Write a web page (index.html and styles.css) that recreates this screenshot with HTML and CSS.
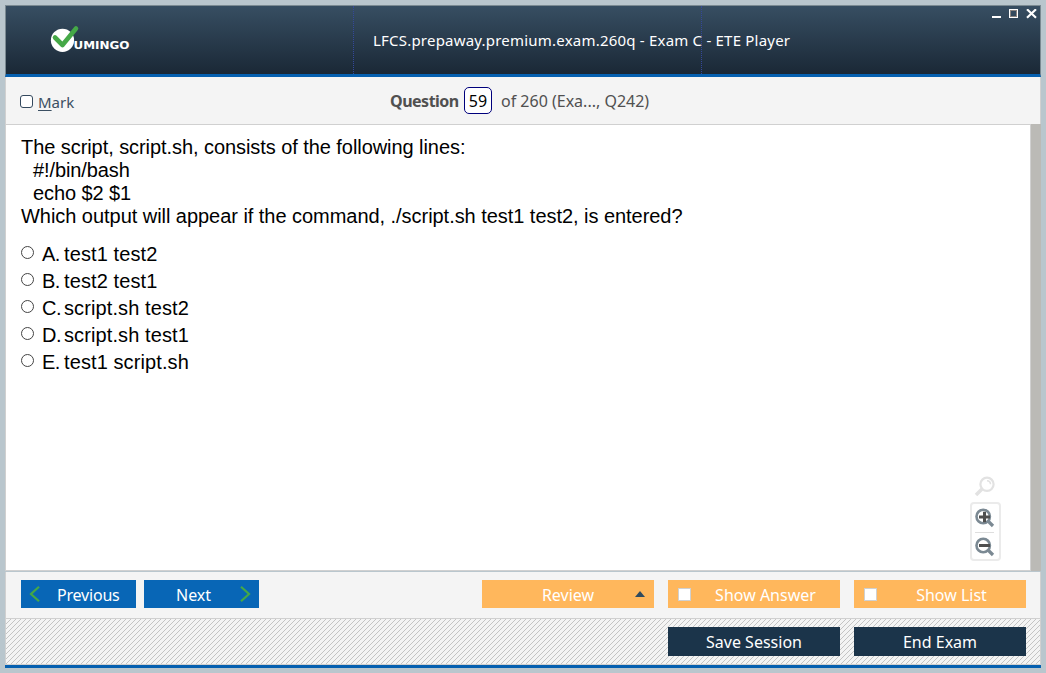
FILE: index.html
```html
<!DOCTYPE html>
<html lang="en">
<head>
<meta charset="utf-8">
<title>LFCS.prepaway.premium.exam.260q - Exam C - ETE Player</title>
<link rel="stylesheet" href="styles.css">
</head>
<body>
<div class="window">
  <header class="titlebar">
    <div class="brand">
      <svg class="logo" width="84" height="30" viewBox="0 0 84 30">
        <circle cx="12.5" cy="16.3" r="11.6" fill="#fff"/>
        <path d="M5 13.5L12.5 21L26 4.5" fill="none" stroke="#45a847" stroke-width="4.6" stroke-linecap="round" stroke-linejoin="round"/>
        <text class="logo-text" x="23.5" y="25" textLength="56" lengthAdjust="spacingAndGlyphs">UMINGO</text>
      </svg>
    </div>
    <h1 class="title"><span class="title-text">LFCS.prepaway.premium.exam.260q - Exam C - ETE Player</span></h1>
    <svg class="controls" width="46" height="12" viewBox="0 0 46 12" shape-rendering="crispEdges">
      <path d="M0 7h9v2H0z" fill="#fff"/>
      <rect x="17.5" y=".5" width="8" height="8" fill="none" stroke="#fff"/>
      <rect x="18.5" y="1.5" width="6" height="6" fill="none" stroke="#8b8480"/>
      <path d="M35 .3L44 8.7M44 .3L35 8.7" stroke="#fff" stroke-width="2.2" fill="none" shape-rendering="auto"/>
    </svg>
  </header>
  <section class="questionbar">
    <label class="mark"><span class="markbox"></span><span class="mark-text"><u>M</u>ark</span></label>
    <b class="q-label">Question</b>
    <span class="q-number">59</span>
    <span class="q-total">of 260 (Exa..., Q242)</span>
  </section>
  <main class="content">
    <div class="page">
      <div class="question">
        <p>The script, script.sh, consists of the following lines:</p>
        <p class="code">#!/bin/bash</p>
        <p class="code">echo $2 $1</p>
        <p class="ask">Which output will appear if the command, ./script.sh test1 test2, is entered?</p>
      </div>
      <ul class="answers">
        <li><i class="radio"></i><span class="letter">A.</span><span class="answer">test1 test2</span></li>
        <li><i class="radio"></i><span class="letter">B.</span><span class="answer">test2 test1</span></li>
        <li><i class="radio"></i><span class="letter">C.</span><span class="answer">script.sh test2</span></li>
        <li><i class="radio"></i><span class="letter">D.</span><span class="answer">script.sh test1</span></li>
        <li><i class="radio"></i><span class="letter">E.</span><span class="answer">test1 script.sh</span></li>
      </ul>
      <div class="zoom">
        <svg class="zoom-reset" width="22" height="22" viewBox="0 0 22 22">
          <circle cx="13" cy="8.3" r="6.6" fill="none" stroke="#e2e2e2" stroke-width="2.2"/>
          <path d="M13 4.8A3.6 3.6 0 0 1 16.5 8.3" fill="none" stroke="#e2e2e2" stroke-width="1.6"/>
          <path d="M8 13L2 19" stroke="#e2e2e2" stroke-width="3.6"/>
        </svg>
        <div class="zoom-box">
          <svg width="20" height="20" viewBox="0 0 20 20">
            <circle cx="8.2" cy="8.5" r="6.7" fill="none" stroke="#7b8993" stroke-width="2.6"/>
            <path d="M13 13L18 18" stroke="#7b8993" stroke-width="3.2"/>
            <path d="M4 9h11M9.5 3.7v10.6" stroke="#4f4f4f" stroke-width="3"/>
          </svg>
          <hr class="zoom-line">
          <svg width="20" height="20" viewBox="0 0 20 20">
            <circle cx="8.2" cy="8.5" r="6.7" fill="none" stroke="#7b8993" stroke-width="2.6"/>
            <path d="M13 13L18 18" stroke="#7b8993" stroke-width="3.2"/>
            <path d="M4 8.5h11" stroke="#4f4f4f" stroke-width="3"/>
          </svg>
        </div>
      </div>
    </div>
    <div class="scrollbar"></div>
  </main>
  <nav class="navbar">
    <div class="btn blue prev">
      <svg width="11" height="18" viewBox="0 0 11 18"><path d="M10 1.7L2 9L10 16.3" fill="none" stroke="#45a847" stroke-width="2.2"/></svg>
      <span class="t-prev">Previous</span>
    </div>
    <div class="btn blue next">
      <span class="t-next">Next</span>
      <svg width="11" height="18" viewBox="0 0 11 18"><path d="M1 1.7L9 9L1 16.3" fill="none" stroke="#45a847" stroke-width="2.2"/></svg>
    </div>
    <div class="btn orange review"><span>Review</span>
      <svg class="arrow" width="10" height="6" viewBox="0 0 10 6"><path d="M0 6L5 0L10 6z" fill="#2f4a5e"/></svg>
    </div>
    <div class="btn orange toggle"><i class="check"></i><span>Show Answer</span></div>
    <div class="btn orange toggle"><i class="check"></i><span>Show List</span></div>
  </nav>
  <footer class="sessionbar">
    <svg class="hatch" width="100%" height="100%">
      <defs><pattern id="hatch" width="5" height="5" patternUnits="userSpaceOnUse">
        <path d="M4 0h1v1H4zM3 1h1v1H3zM2 2h1v1H2zM1 3h1v1H1zM0 4h1v1H0z" fill="#c4c4c4" shape-rendering="crispEdges"/>
      </pattern></defs>
      <rect width="100%" height="100%" fill="url(#hatch)"/>
    </svg>
    <div class="btn navy"><span>Save Session</span></div>
    <div class="btn navy"><span>End Exam</span></div>
  </footer>
</div>
</body>
</html>
```
FILE: styles.css
```css
* { box-sizing: border-box; }
body { margin: 0; background: #b9c6cd; font-family: "Noto Sans", "Open Sans", sans-serif; overflow: hidden; }
p, h1, ul { margin: 0; padding: 0; }
span, b { white-space: nowrap; }
.window { width: 1036px; height: 663px; margin: 5px; display: flex; flex-direction: column; border-bottom: 3px solid #0560b0; }

.titlebar { height: 72px; flex: none; display: grid; grid-template-columns: 348px 348px 1fr; border: 1px solid #7b8a92; border-bottom: 3px solid #0560b0; background: linear-gradient(#374e62, #1a2836); }
.brand { padding: 18px 0 0 44px; border-right: 1px dotted #34489a; }
.logo { display: block; }
.logo-text { font: bold 9.6px "DejaVu Sans", sans-serif; fill: #fff; }
.title { padding: 23px 0 0 19px; border-right: 1px dotted #34489a; font-size: 15px; line-height: 22px; font-weight: 400; letter-spacing: .21px; color: #fff; }
.controls { justify-self: end; margin: 3px 2px 0 0; display: block; }

.questionbar { height: 47px; flex: none; display: flex; align-items: flex-start; background: #f4f4f4; border-left: 1px solid #d0d0d0; border-right: 1px solid #d0d0d0; color: #505050; font-size: 16px; line-height: 22px; }
.mark { display: flex; width: 370px; padding: 14px 0 0 14px; color: #3b4f62; font-size: 15px; }
.markbox { width: 13px; height: 13px; margin: 4px 5px 0 0; border: 1px solid #34495e; border-radius: 3px; background: #fff; }
.mark u { text-underline-offset: 2px; }
.q-label { width: 74px; padding: 13px 0 0 14px; letter-spacing: -.5px; }
.q-number { width: 28px; height: 27px; margin: 10px 9px 0 14px; border: 1px solid #00007c; border-radius: 5px; background: #fff; color: #000; text-align: center; line-height: 27px; }
.q-total { padding-top: 13px; }

.content { height: 448px; flex: none; display: flex; }
.page { position: relative; flex: 1; height: 447px; background: #fff; border: 1px solid #d0d0d0; font-family: "Liberation Sans", Arial, sans-serif; font-size: 20px; color: #000; padding: 11px 0 0 15px; }
.scrollbar { width: 10px; height: 447px; background: #bbbab6; }
.question { line-height: 23px; letter-spacing: -.065px; }
.question .code { padding-left: 12px; letter-spacing: -.1px; }
.question .ask { letter-spacing: -.042px; }
.answers { list-style: none; margin-top: 13px; }
.answers li { display: flex; height: 27px; line-height: 27px; }
.radio { width: 13px; height: 13px; margin: 5px 8px 0 0; border: 1px solid #444; border-radius: 50%; }
.letter { width: 22px; letter-spacing: -.5px; }
.answer { letter-spacing: .1px; }
.zoom { position: absolute; right: 29px; bottom: 9px; width: 31px; display: flex; flex-direction: column; }
.zoom-reset { margin: 0 0 4px 4px; }
.zoom-box { height: 59px; border: 2px solid #ebebeb; border-radius: 4px; padding: 4px 3px 0 4px; }
.zoom-box svg { display: block; margin-left: -1px; }
.zoom-line { height: 1px; width: 19px; border: 0; background: #dedede; margin: 4px 0 4px -1px; }

.btn { display: flex; align-items: center; height: 28px; color: #fff; font-size: 16px; line-height: 28px; }
.navbar { height: 46px; flex: none; display: flex; padding: 8px 14px 0 15px; background: #f4f4f4; border-left: 1px solid #d0d0d0; border-right: 1px solid #d0d0d0; }
.navbar .btn span { padding-top: 1px; }
.blue { width: 115px; background: #0866b6; }
.prev { padding-left: 8px; margin-right: 8px; }
.prev span { margin-left: 17px; letter-spacing: -.2px; }
.next { padding-left: 32px; justify-content: space-between; padding-right: 8px; margin-right: auto; }
.orange { width: 172px; margin-left: 14px; background: #ffb75c; position: relative; justify-content: center; }
.arrow { position: absolute; right: 9px; top: 11px; }
.check { width: 13px; height: 13px; background: #fff; border: 1px solid #d0d0d0; }
.toggle { justify-content: flex-start; padding-left: 10px; }
.toggle span { flex: 1; text-align: center; }
.sessionbar { height: 47px; flex: none; display: flex; justify-content: flex-end; gap: 14px; padding: 8px 14px 0 0; position: relative; background: #f4f4f4; border: 1px solid #d0d0d0; }
.hatch { position: absolute; inset: 0; }
.navy { width: 172px; height: 29px; background: #1b344a; justify-content: center; position: relative; }
```
